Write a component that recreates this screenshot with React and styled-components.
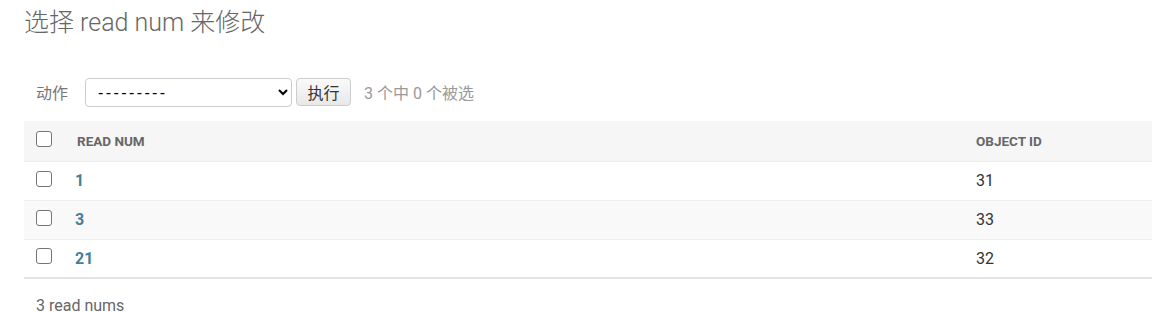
import React from 'react';
import styled, { createGlobalStyle } from 'styled-components';

const GlobalStyle = createGlobalStyle`
  html, body {
    margin: 0;
    padding: 0;
    background: #fff;
    overflow: hidden;
  }
  body {
    font-family: Roboto, 'Liberation Sans', 'Noto Sans CJK SC', sans-serif;
    color: #333;
  }
`;

const Content = styled.div`
  padding: 8px 0 0 24px;
`;

const Title = styled.h1`
  margin: 0 0 32px;
  font-size: 25px;
  font-weight: 300;
  line-height: 30px;
  color: #666;
  font-family: Roboto, 'Noto Sans CJK SC', sans-serif;
`;

const Actions = styled.div`
  display: flex;
  align-items: center;
  height: 44px;
  padding: 0 12px;
  margin-bottom: 7px;
  font-size: 16px;
  color: #777;
  font-family: Roboto, 'Noto Sans CJK SC', sans-serif;
`;

const Label = styled.label`
  margin-right: 17px;
`;

const Select = styled.select`
  width: 207px;
  height: 29px;
  border: 1px solid #ccc;
  border-radius: 4px;
  background: #fff;
  padding: 0 8px;
  font-size: 16px;
  letter-spacing: 2.4px;
  font-family: 'Liberation Sans', Arial, sans-serif;
  color: #000;
`;

const Go = styled.button`
  margin-left: 4px;
  height: 28px;
  width: 55px;
  padding: 0;
  border: 1px solid #ccc;
  border-radius: 4px;
  background: linear-gradient(#fafafa, #e8e8e8);
  font-size: 16px;
  color: #333;
  font-family: 'Noto Sans CJK SC', sans-serif;
`;

const Counter = styled.span`
  margin-left: 13px;
  color: #999;
`;

const Table = styled.table`
  width: 1128px;
  border-collapse: collapse;
  table-layout: fixed;
  border-bottom: 2px solid #e4e4e4;
`;

const HeadRow = styled.tr`
  height: 40px;
  background: #f6f6f6;
  border-bottom: 1px solid #eee;
`;

const Th = styled.th`
  text-align: left;
  padding: 0 0 0 ${p => (p.$check ? 12 : 10)}px;
  font-size: 13.5px;
  font-weight: 700;
  color: #666;
  text-transform: uppercase;
  vertical-align: middle;
`;

const Row = styled.tr`
  height: 39px;
  background: ${p => (p.$alt ? '#f9f9f9' : '#fff')};
  border-bottom: 1px solid #eee;
  &:last-child {
    border-bottom: none;
  }
`;

const Td = styled.td`
  padding: 0 0 0 ${p => p.$pad}px;
  font-size: 16px;
  color: #333;
  vertical-align: middle;
`;

const Check = styled.input.attrs({ type: 'checkbox' })`
  appearance: none;
  display: block;
  margin: 0;
  width: 16px;
  height: 16px;
  border: 1.5px solid #767676;
  border-radius: 3px;
  background: #fff;
  box-sizing: border-box;
  position: relative;
  top: -2px;
`;

const Link = styled.a`
  color: #447e9b;
  font-weight: 700;
  text-decoration: none;
`;

const Paginator = styled.p`
  margin: 0;
  padding: 17px 12px 0;
  font-size: 16px;
  color: #666;
`;

const rows = [
  { num: 1, id: 31 },
  { num: 3, id: 33 },
  { num: 21, id: 32 },
];

export default function App() {
  return (
    <>
      <GlobalStyle />
      <Content>
        <Title>选择 read num 来修改</Title>
        <Actions>
          <Label>动作</Label>
          <Select defaultValue="">
            <option value="">---------</option>
          </Select>
          <Go>执行</Go>
          <Counter>3 个中 0 个被选</Counter>
        </Actions>
        <Table>
          <colgroup>
            <col style={{ width: 43 }} />
            <col style={{ width: 899 }} />
            <col />
          </colgroup>
          <thead>
            <HeadRow>
              <Th $check><Check /></Th>
              <Th>Read num</Th>
              <Th>Object id</Th>
            </HeadRow>
          </thead>
          <tbody>
            {rows.map((r, i) => (
              <Row key={r.id} $alt={i % 2 === 1}>
                <Td $pad={12}><Check /></Td>
                <Td $pad={8}><Link href="#">{r.num}</Link></Td>
                <Td $pad={10}>{r.id}</Td>
              </Row>
            ))}
          </tbody>
        </Table>
        <Paginator>3 read nums</Paginator>
      </Content>
    </>
  );
}
